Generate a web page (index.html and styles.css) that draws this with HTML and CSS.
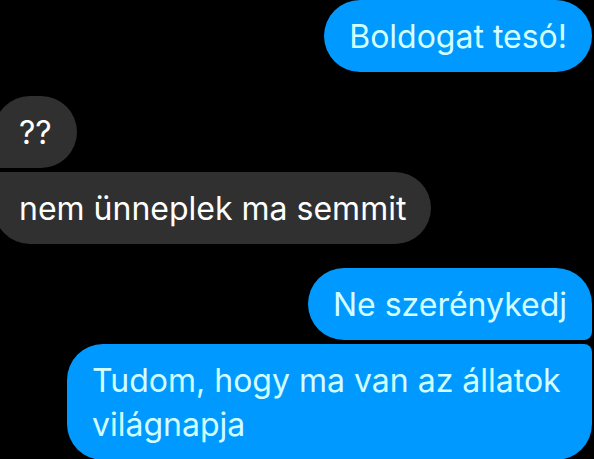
FILE: index.html
```html
<!DOCTYPE html>
<html lang="hu">
<head>
<meta charset="utf-8">
<meta name="viewport" content="width=device-width, initial-scale=1">
<title>Chat</title>
<link rel="stylesheet" href="styles.css">
</head>
<body>
<main class="chat">
  <section class="group sent">
    <p class="bubble">Boldogat tesó!</p>
  </section>
  <section class="group received">
    <p class="bubble">??</p>
    <p class="bubble">nem ünneplek ma semmit</p>
  </section>
  <section class="group sent">
    <p class="bubble">Ne szerénykedj</p>
    <p class="bubble">Tudom, hogy ma van az állatok világnapja</p>
  </section>
</main>
</body>
</html>
```
FILE: styles.css
```css
body {
  margin: 0;
  background: #000;
  color: #fff;
  font: 32px/44px Inter, "Liberation Sans", sans-serif;
}

.chat {
  display: flex;
  flex-direction: column;
  gap: 24px;
  padding-right: 2px;
}

.group {
  display: flex;
  flex-direction: column;
  gap: 4px;
}

.bubble {
  box-sizing: border-box;
  max-width: 525px;
  margin: 0;
  padding: 15px 25px 13px;
  border-radius: 36px;
}

.sent {
  align-items: flex-end;
}

.sent .bubble {
  background: #0099ff;
  color: #d2ffff;
}

.sent .bubble:not(:last-child) {
  border-bottom-right-radius: 8px;
}

.sent .bubble:not(:first-child) {
  border-top-right-radius: 8px;
}

/* Received bubbles run slightly past the left edge of the screen. */
.received {
  align-items: flex-start;
  margin-left: -6px;
}

.received .bubble {
  background: #303030;
}

.received .bubble:not(:last-child) {
  border-bottom-left-radius: 6px;
}

.received .bubble:not(:first-child) {
  border-top-left-radius: 6px;
}
```
